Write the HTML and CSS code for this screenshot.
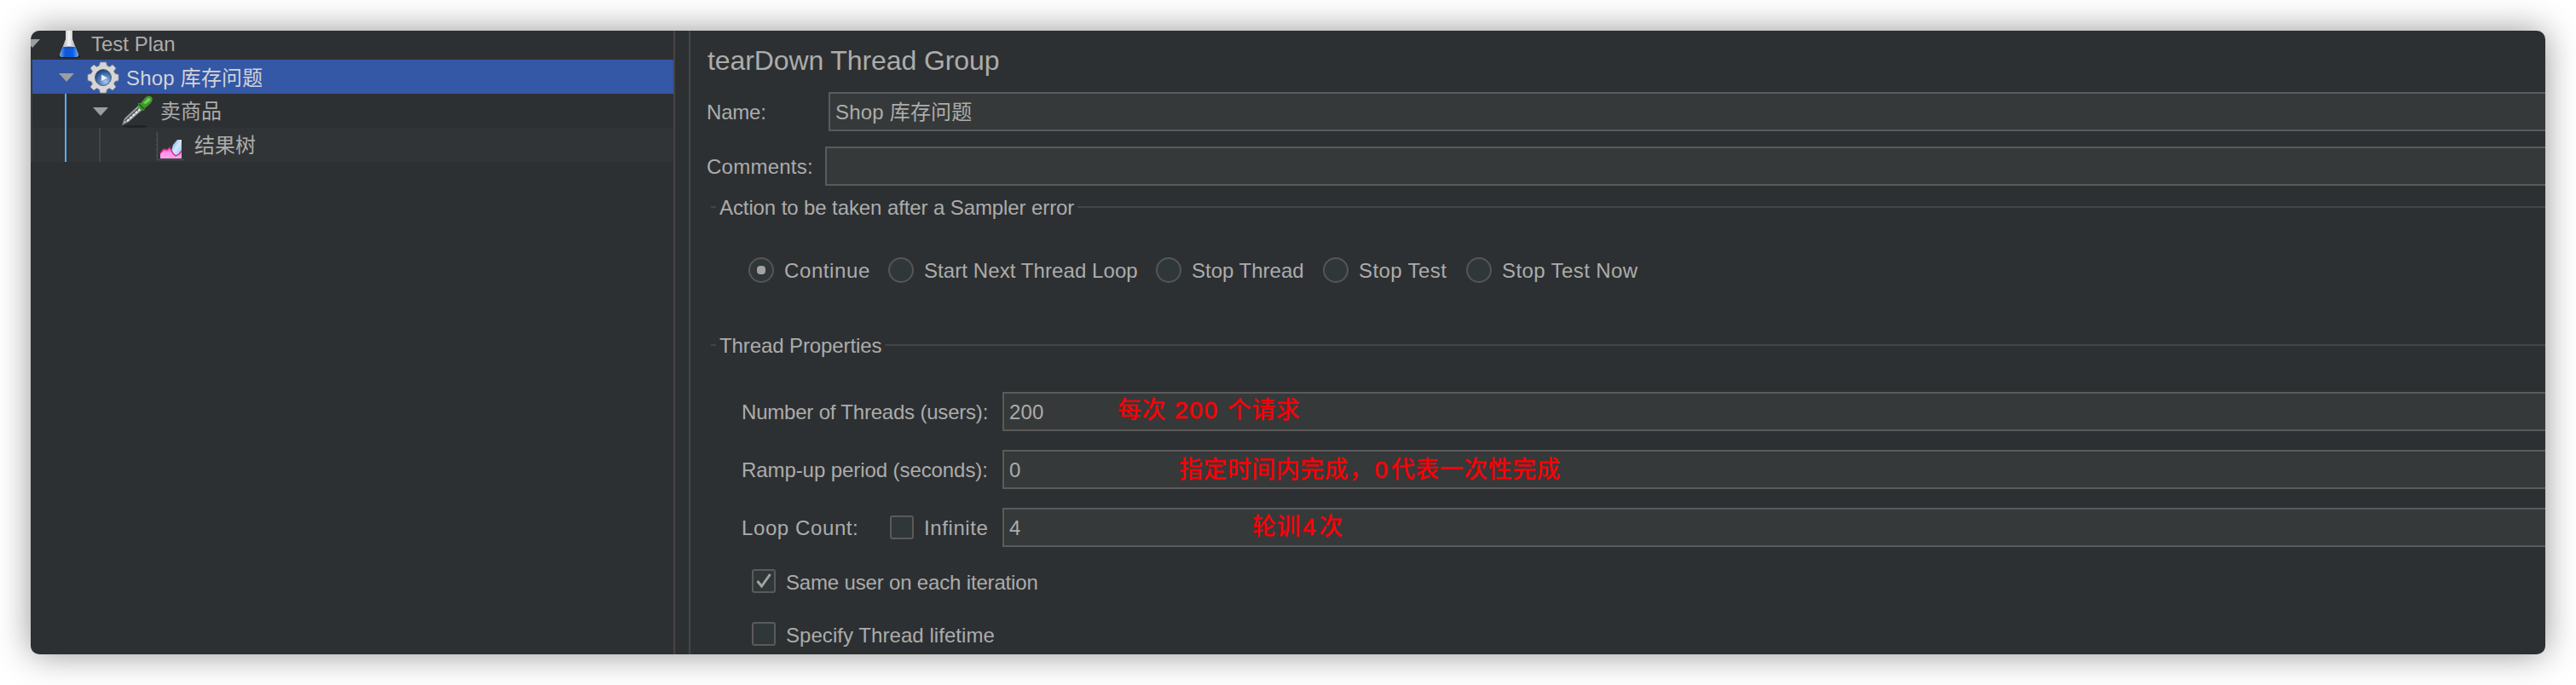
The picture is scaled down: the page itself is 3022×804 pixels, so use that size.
FILE: index.html
```html
<!DOCTYPE html>
<html lang="zh">
<head>
<meta charset="utf-8">
<title>tearDown Thread Group</title>
<link rel="stylesheet" href="styles.css">
</head>
<body>
<div class="window">
  <nav class="tree">
    <div class="row row-root">
      <svg class="arrow" viewBox="0 0 18 10"><path d="M0 0H18L9 10Z"/></svg>
      <svg class="icon icon-flask" viewBox="0 0 26 34">
        <defs>
          <linearGradient id="glass" x1="0" x2="1"><stop offset="0" stop-color="#8e9294"/><stop offset=".5" stop-color="#f4f4f4"/><stop offset="1" stop-color="#8a8e90"/></linearGradient>
          <linearGradient id="liquid" x1="0" x2="1"><stop offset="0" stop-color="#6fa4ea"/><stop offset=".3" stop-color="#0c57d6"/><stop offset=".7" stop-color="#0660ea"/><stop offset="1" stop-color="#7aa6e8"/></linearGradient>
        </defs>
        <ellipse cx="13" cy="31.500" rx="13" ry="1.800" fill="#1c1e20"/>
        <path d="M9 1H17V11L24 29Q24 32 21 32H5Q2 32 2 29L9 11Z" fill="url(#glass)"/>
        <path d="M5.500 20H20.500L24 29Q24 32 21 32H5Q2 32 2 29Z" fill="url(#liquid)"/>
        <ellipse cx="13" cy="21" rx="6" ry="1.500" fill="#1c4fb0"/>
      </svg>
      <span class="label">Test Plan</span>
    </div>
    <div class="row row-group">
      <svg class="arrow" viewBox="0 0 18 10"><path d="M0 0H18L9 10Z"/></svg>
      <svg class="icon icon-gear" viewBox="0 0 38 38">
        <defs><radialGradient id="hub" cx=".65" cy=".75" r=".75"><stop offset="0" stop-color="#a8c8f0"/><stop offset=".5" stop-color="#5580bd"/><stop offset="1" stop-color="#1d3c70"/></radialGradient></defs>
        <path d="M15.500 1H22.500L23.500 5L26.500 6.500L30 4L34 8L31.500 11.500L33 14.500L37 15.500V22.500L33 23.500L31.500 26.500L34 30L30 34L26.500 31.500L23.500 33L22.500 37H15.500L14.500 33L11.500 31.500L8 34L4 30L6.500 26.500L5 23.500L1 22.500V15.500L5 14.500L6.500 11.500L4 8L8 4L11.500 6.500L14.500 5Z" fill="#d6d6d6" stroke="#8f8f90" stroke-width=".8"/>
        <circle cx="19" cy="19" r="9.500" fill="url(#hub)" stroke="#53637f"/>
        <path d="M17 15.500L24 19.500L17 23Z" fill="#e6eef8"/>
      </svg>
      <span class="label">Shop 库存问题</span>
    </div>
    <div class="row row-sampler">
      <span class="guide guide-active"></span>
      <svg class="arrow" viewBox="0 0 18 10"><path d="M0 0H18L9 10Z"/></svg>
      <svg class="icon icon-dropper" viewBox="0 0 38 38">
        <ellipse cx="17" cy="36.500" rx="14" ry="1.300" fill="#1d2022"/>
        <path d="M1 35L4 27L20 12L25 17L9 31Z" fill="#a8aaab" stroke="#55585a"/>
        <path d="M5 30L21 15" stroke="#4c5052" stroke-width="2"/>
        <path d="M7 30L22 16" stroke="#f0f0f0" stroke-width="2" stroke-dasharray="3 1.500"/>
        <path d="M20 9L23 9L29 2Q33-1 36 2Q38 5 35 9L28 15L27 18L23 17L20 13Z" fill="#3f9a2d"/>
        <path d="M26 9L32 3Q35 3 34 6L29 10Z" fill="#77ce59"/>
        <path d="M21 10L27 16" stroke="#1d6e20" stroke-width="2"/>
      </svg>
      <span class="label">卖商品</span>
    </div>
    <div class="row row-result">
      <span class="guide guide-active"></span>
      <span class="guide guide-muted"></span>
      <svg class="icon icon-chart" viewBox="0 0 34 36">
        <defs>
          <linearGradient id="pink" x2="0" y2="1"><stop offset="0" stop-color="#f050b0"/><stop offset=".5" stop-color="#ff94ec"/><stop offset="1" stop-color="#ffa4e6"/></linearGradient>
          <linearGradient id="sky" x2="1" y2="1"><stop offset="0" stop-color="#5c9fe6"/><stop offset=".5" stop-color="#d4e8fc"/><stop offset="1" stop-color="#8bbdf2"/></linearGradient>
        </defs>
        <path d="M1.500 2V34.500H33" fill="none" stroke="#4a4d50" stroke-width="1.500"/>
        <path d="M0 5H2M0 11H2M0 17H2M0 23H2M0 29H2" stroke="#55585a"/>
        <path d="M18 24L20 17L25 11H30V30H20Z" fill="url(#sky)"/>
        <path d="M5 33V27L9 22L13 23L16 20L20 27L23 30L27 28L30 24V33Z" fill="url(#pink)"/>
        <path d="M5 27L9 22L13 23L16 20L20 27L23 30L27 28L30 24" fill="none" stroke="#cf2580" stroke-width="1.300"/>
      </svg>
      <span class="label">结果树</span>
    </div>
  </nav>
  <div class="splitter"></div>
  <main class="form">
    <h1 class="title">tearDown Thread Group</h1>
    <div class="field-row name-row"><label class="text">Name:</label><div class="input"><span class="text">Shop 库存问题</span></div></div>
    <div class="field-row comments-row"><label class="text">Comments:</label><div class="input"></div></div>

    <div class="legend"><span class="text">Action to be taken after a Sampler error</span></div>
    <div class="radios">
      <span class="radio radio-on"></span><span class="text opt-continue">Continue</span>
      <span class="radio"></span><span class="text opt-next">Start Next Thread Loop</span>
      <span class="radio"></span><span class="text opt-thread">Stop Thread</span>
      <span class="radio"></span><span class="text opt-test">Stop Test</span>
      <span class="radio"></span><span class="text opt-now">Stop Test Now</span>
    </div>

    <div class="legend legend-props"><span class="text">Thread Properties</span></div>
    <div class="props">
      <div class="prop"><label class="text prop-threads">Number of Threads (users):</label>
        <div class="input"><span class="text">200</span><span class="note note-threads">每次<span class="num num-wide">200</span>个请求</span></div></div>
      <div class="prop"><label class="text prop-ramp">Ramp-up period (seconds):</label>
        <div class="input"><span class="text">0</span><span class="note note-ramp">指定时间内完成，<span class="num">0</span>代表一次性完成</span></div></div>
      <div class="prop"><div class="prop-loop"><label class="text loop-label">Loop Count:</label><span class="check"></span><span class="text infinite">Infinite</span></div>
        <div class="input"><span class="text">4</span><span class="note note-loop">轮训<span class="num">4</span>次</span></div></div>
    </div>
    <div class="check-row same-user"><span class="check"><svg class="tick" viewBox="0 0 24 24"><path d="M4.500 12L9.500 18L19.500 4"/></svg></span><span class="text">Same user on each iteration</span></div>
    <div class="check-row lifetime"><span class="check"></span><span class="text">Specify Thread lifetime</span></div>
  </main>
</div>
</body>
</html>
```
FILE: styles.css
```css
* { box-sizing: border-box; }
body {
  margin: 0;
  padding: 36px;
  height: 804px;
  overflow: hidden;
  background: #fff;
  font: 24px/40px "Liberation Sans", "Noto Sans CJK SC", sans-serif;
  color: #acacac;
}
.window {
  display: flex;
  width: 2950px;
  height: 732px;
  border-radius: 10px;
  overflow: hidden;
  background: #2d3032;
  box-shadow: 0 0 40px rgba(0, 0, 0, .42);
}
.text, .label { white-space: pre; padding-top: 2px; }

/* Tree */
.tree { width: 754px; flex: none; }
.row { display: flex; align-items: center; height: 40px; border-left: 2px solid #393b3d; }
.row-root { height: 40px; margin-top: -6px; border-left: 0; }
.row-group { background: #3457a6; color: #d2d4d8; }
.row-result { background: #313436; }
.arrow { width: 18px; height: 10px; flex: none; fill: #9b9d9f; margin-top: 2px; }
.row-root .arrow { margin-left: -7px; }
.row-group .arrow { margin-left: 31px; }
.row-sampler .arrow { margin-left: 31px; }
.icon { flex: none; overflow: visible; }
.icon-flask { width: 26px; height: 34px; margin: 4px 0 0 21px; }
.row-root .label { margin-left: 13px; padding-top: 4px; }
.icon-gear { width: 38px; height: 38px; margin: 2px 0 0 15px; }
.row-group .label { margin-left: 8px; padding-top: 3px; letter-spacing: .2px; }
.icon-dropper { width: 38px; height: 38px; margin: 2px 0 0 15px; }
.row-sampler .label { margin-left: 8px; }
.icon-chart { width: 34px; height: 36px; margin: 2px 0 0 65px; }
.row-result .label { margin-left: 11px; }
.guide { width: 2px; height: 40px; margin-left: 38px; flex: none; }
.guide-active { background: #55adf5; }
.guide-muted { background: #444648; }
.splitter { width: 20px; flex: none; border: solid #464443; border-width: 0 2px; }

/* Form */
.form { flex: 1; min-width: 0; }
.title { margin: 0 0 2px 20px; font-size: 32px; font-weight: 400; line-height: 70px; letter-spacing: -.1px; }
.field-row { display: flex; height: 46px; margin-left: 19px; align-items: center; }
.name-row label { width: 143px; letter-spacing: -.2px; }
.comments-row { margin-top: 18px; }
.comments-row label { width: 139px; letter-spacing: .25px; }
.input {
  position: relative;
  display: flex;
  align-items: center;
  flex: 1;
  height: 46px;
  padding-left: 6px;
  letter-spacing: .2px;
  border: 2px solid #5c5a5a;
  border-right: 0;
  background: #363939;
}
.legend { display: flex; align-items: center; height: 50px; margin-left: 24px; letter-spacing: -.1px; }
.legend::before { content: ""; width: 6px; height: 2px; margin-right: 4px; background: #464443; }
.legend::after { content: ""; flex: 1; height: 2px; margin-left: 4px; background: #464443; }
.legend-props { margin-top: 43px; }
.radios { display: flex; align-items: center; height: 40px; margin: 29px 0 0 68px; }
.radio {
  display: flex;
  align-items: center;
  justify-content: center;
  width: 30px;
  height: 30px;
  margin-right: 12px;
  border: 2px solid #555656;
  border-radius: 50%;
  background: #303739;
}
.radio-on::after { content: ""; width: 10px; height: 10px; border-radius: 4px; background: #a2a2a2; }
.opt-continue { width: 122px; letter-spacing: .6px; }
.opt-next { width: 272px; letter-spacing: .08px; }
.opt-thread { width: 154px; }
.opt-test { width: 126px; letter-spacing: .4px; }
.opt-now { letter-spacing: .4px; }
.props { display: grid; gap: 22px; margin: 30px 0 0 60px; }
.prop { display: grid; grid-template-columns: 306px 1fr; align-items: center; }
.prop-threads { letter-spacing: -.2px; }
.prop-ramp { letter-spacing: -.08px; }
.prop-loop { display: flex; align-items: center; }
.loop-label { width: 174px; letter-spacing: .6px; }
.infinite { letter-spacing: .6px; }
.check {
  display: flex;
  flex: none;
  width: 28px;
  height: 28px;
  margin-right: 12px;
  border: 2px solid #5a5a58;
  border-radius: 3px;
  background: #303739;
}
.tick { width: 24px; height: 24px; fill: none; stroke: #a2a2a2; stroke-width: 3; }
.check-row { display: flex; align-items: center; height: 40px; margin-left: 72px; }
.check-row .text { padding-top: 4px; }
.same-user { margin-top: 20px; letter-spacing: -.17px; }
.lifetime { margin-top: 22px; letter-spacing: .05px; }

/* Red annotations drawn over the fields */
.note {
  position: absolute;
  color: #fb0007;
  font-size: 28px;
  font-weight: 500;
  line-height: 42px;
  letter-spacing: .45px;
  white-space: pre;
}
.note-threads { left: 133px; top: -1px; }
.note-ramp { left: 205px; top: 1px; }
.note-loop { left: 291px; top: 0; }
.num { margin: 0 2px; letter-spacing: 1.7px; -webkit-text-stroke: .6px #fb0007; }
.num-wide { margin: 0 10px; }
```
